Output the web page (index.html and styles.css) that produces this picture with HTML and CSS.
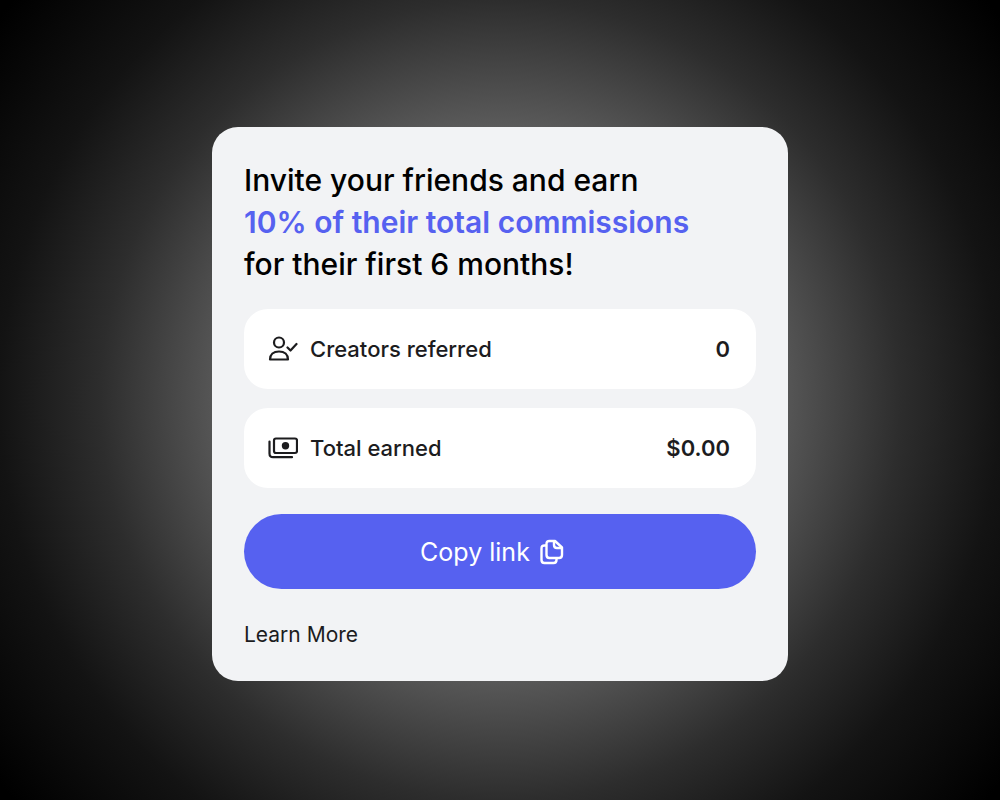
FILE: index.html
```html
<!DOCTYPE html>
<html lang="en">

<head>
    <meta charset="UTF-8">
    <meta name="viewport" content="width=device-width, initial-scale=1.0">
    <title>Invite your friends</title>
    <link rel="stylesheet" href="styles.css">
</head>

<body>
    <main class="invite-card">
        <h1 class="title">
            Invite your friends and earn<br>
            <span class="highlight">10% of their total commissions</span><br>
            for their first 6 months!
        </h1>

        <!-- Referral stats -->
        <dl class="stats">
            <div class="stat">
                <dt class="stat-label">
                    <svg class="stat-icon" viewBox="0 0 30 30" fill="none" stroke="currentColor" stroke-width="2.200" stroke-linecap="round" stroke-linejoin="round" aria-hidden="true">
                        <circle cx="11" cy="8.500" r="5" />
                        <path d="M2 25.500C2 20.500 5.500 17.500 11 17.500S20 20.500 20 25.500Z" />
                        <path d="M19.500 13.500L22.500 16.500L28.500 10" />
                    </svg>
                    Creators referred
                </dt>
                <dd class="stat-value">0</dd>
            </div>
            <div class="stat">
                <dt class="stat-label">
                    <svg class="stat-icon" viewBox="0 0 30 30" fill="none" stroke="currentColor" stroke-width="2.200" stroke-linecap="round" stroke-linejoin="round" aria-hidden="true">
                        <rect x="6" y="5.500" width="23" height="14.500" rx="2" />
                        <circle cx="17.500" cy="12.700" r="3.700" fill="currentColor" stroke="none" />
                        <path d="M1.500 8.500V20.500Q1.500 24.200 5 24.200H24" />
                    </svg>
                    Total earned
                </dt>
                <dd class="stat-value">$0.00</dd>
            </div>
        </dl>

        <button type="button" class="copy-btn">
            Copy link
            <svg class="copy-icon" viewBox="0 0 24 26" fill="none" stroke="currentColor" stroke-width="2.400" stroke-linecap="round" stroke-linejoin="round" aria-hidden="true">
                <path d="M9.500 2H15L22 8.500V16Q22 19 19 19H9.500Q6.500 19 6.500 16V5Q6.500 2 9.500 2Z" />
                <path d="M14 2.500V6Q14 9 17 9H21.500" />
                <path d="M6 6.500H4.500Q1.500 6.500 1.500 9.500V21Q1.500 24 4.500 24H13.500Q16.500 24 16.500 21V19.500" />
            </svg>
        </button>

        <a href="#" class="learn-more">Learn More</a>
    </main>
</body>

</html>
```
FILE: styles.css
```css
* {
    margin: 0;
    padding: 0;
    box-sizing: border-box;
}

body {
    min-height: 100vh;
    display: flex;
    align-items: center;
    justify-content: center;
    padding: 32px 24px 24px;
    background: #000 radial-gradient(circle at center, #b8b8b8 0, #585858 280px, #2d2d2d 400px, #131313 500px, #000 630px);
    font-family: Inter, sans-serif;
    color: #1c1c1e;
}

.invite-card {
    width: 100%;
    max-width: 576px;
    padding: 32px;
    border-radius: 26px;
    background-color: #f2f3f5;
}

.title {
    margin-bottom: 24px;
    font-size: 30px;
    font-weight: 500;
    line-height: 42px;
    color: #000;
}

.highlight {
    font-weight: 600;
    color: #5661f0;
}

.stats {
    display: flex;
    flex-direction: column;
    gap: 19px;
    margin-bottom: 26px;
}

.stat {
    display: flex;
    align-items: center;
    justify-content: space-between;
    height: 80px;
    padding: 0 26px 0 24px;
    border-radius: 24px;
    background-color: #fff;
    font-size: 22px;
    font-weight: 500;
}

.stat-label {
    display: flex;
    align-items: center;
    gap: 12px;
}

.stat-icon {
    width: 30px;
    height: 30px;
}

.stat-value {
    font-weight: 600;
}

.copy-btn {
    display: flex;
    align-items: center;
    justify-content: center;
    gap: 10px;
    width: 100%;
    height: 75px;
    padding-right: 16px;
    margin-bottom: 32px;
    border: none;
    border-radius: 38px;
    background-color: #5661f0;
    color: #fff;
    font-family: inherit;
    font-size: 25px;
    font-weight: 400;
    cursor: pointer;
}

.copy-icon {
    width: 24px;
    height: 26px;
}

.learn-more {
    display: block;
    font-size: 21px;
    line-height: 28px;
    color: inherit;
    text-decoration: none;
}
```
